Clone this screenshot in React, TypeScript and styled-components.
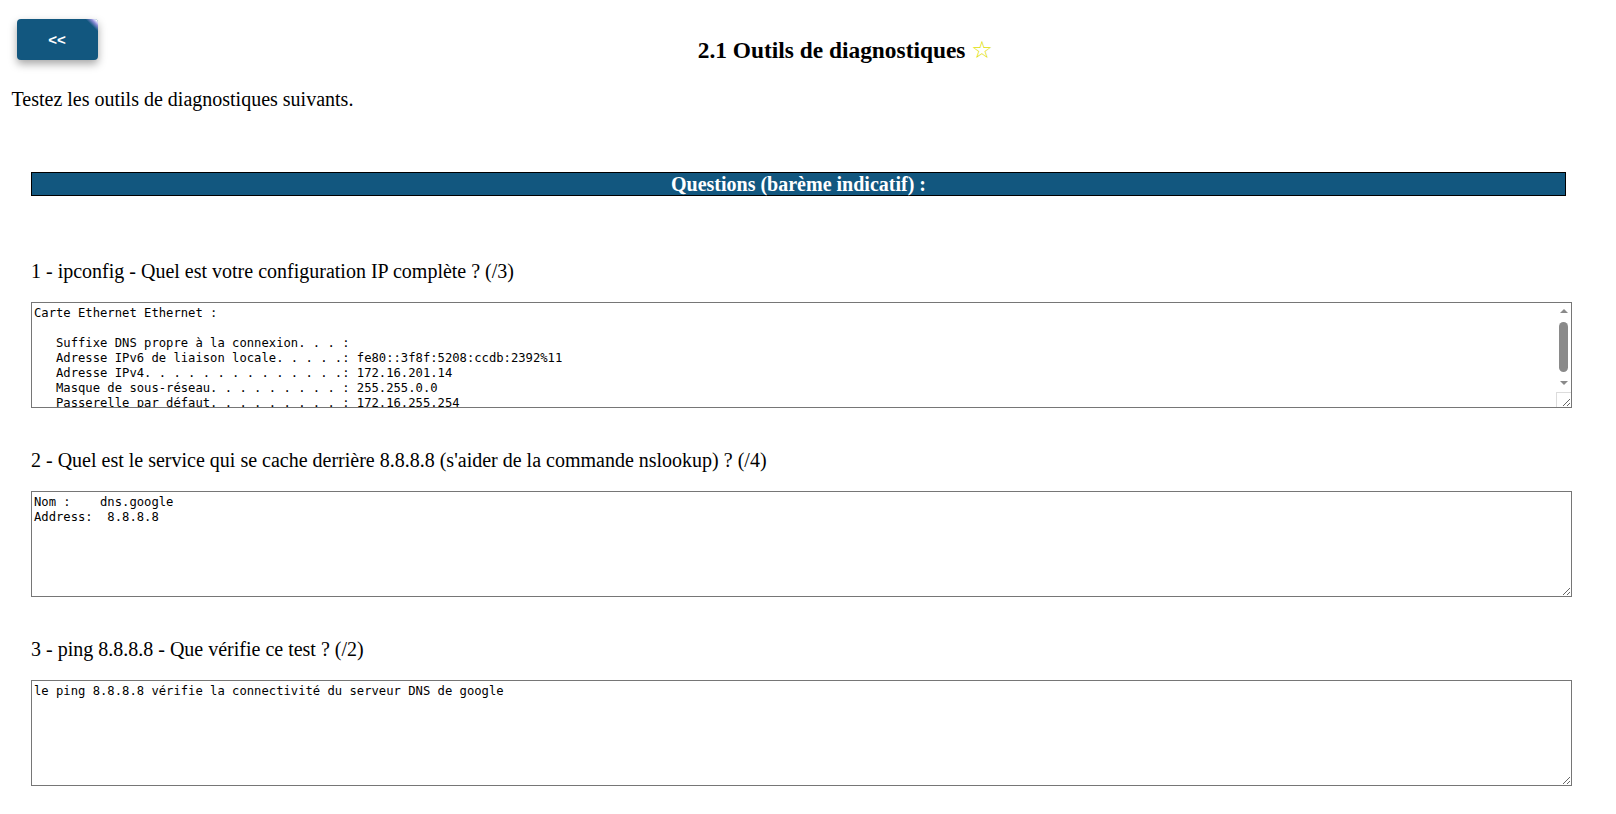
import React from "react";
import styled, { createGlobalStyle } from "styled-components";

const GlobalStyle = createGlobalStyle`
  html, body {
    margin: 0;
    padding: 0;
    background: #ffffff;
  }
  body {
    font-family: "Liberation Serif", "Times New Roman", serif;
    font-size: 20px;
    color: #000000;
  }
`;

const BLUE = "#12577f";
const SCROLL_GREY = "#8a8a8a";

const Page = styled.div`
  padding-top: 19px;
`;

const Header = styled.header`
  display: flex;
  align-items: flex-start;
  padding-left: 16.5px;
`;

const BackButton = styled.button`
  position: relative;
  flex: none;
  width: 81px;
  height: 41px;
  padding: 0;
  border: none;
  border-radius: 4px;
  background: ${BLUE};
  color: #ffffff;
  font-family: "Liberation Sans", Arial, sans-serif;
  font-weight: bold;
  font-size: 15px;
  box-shadow: 0 4px 8px rgba(0, 0, 0, 0.35);
  overflow: hidden;
  cursor: pointer;

  &::after {
    content: "";
    position: absolute;
    top: 0;
    right: 0;
    width: 12px;
    height: 12px;
    background: linear-gradient(
      225deg,
      #ffffff 0px,
      #ffffff 2px,
      #d4d4fa 3px,
      #8c8cd6 5px,
      rgba(18, 87, 127, 0) 9px
    );
  }
`;

const Title = styled.h1`
  flex: 1;
  margin: 17.5px 0 0;
  padding-right: 23px;
  text-align: center;
  font-size: 23.4px;
  font-weight: bold;
  line-height: 27px;
`;

const Star = styled.span`
  font-family: "DejaVu Sans", sans-serif;
  font-weight: normal;
  font-size: 24px;
  color: #e0e000;
`;

const Intro = styled.p`
  margin: 24px 0 0 11.5px;
  line-height: 23px;
`;

const Questions = styled.section`
  margin: 61px 44px 0 31px;
`;

const SectionBar = styled.h2`
  box-sizing: border-box;
  height: 24px;
  margin: 0 6px 0 0;
  border: 1px solid #000000;
  background: ${BLUE};
  color: #ffffff;
  text-align: center;
  font-size: 20px;
  font-weight: bold;
  line-height: 22px;
`;

const QuestionLabel = styled.p<{ $first?: boolean }>`
  margin: ${(p) => (p.$first ? "64px" : "40.5px")} 0 0;
  line-height: 23px;
`;

const AnswerBox = styled.div`
  position: relative;
  margin-top: 19.5px;
`;

const Answer = styled.textarea`
  display: block;
  box-sizing: border-box;
  width: 100%;
  height: 106px;
  margin: 0;
  padding: 3px 2px 2px;
  border: 1px solid #767676;
  background: #ffffff;
  color: #000000;
  font-family: "DejaVu Sans Mono", "Liberation Mono", monospace;
  font-size: 12.2px;
  line-height: 15px;
  resize: both;
  white-space: pre;
  overflow: hidden;
`;

/* Vertical scrollbar drawn over the first answer, as the reference shows it */
const FakeScrollbar = styled.div`
  position: absolute;
  top: 1px;
  right: 1px;
  bottom: 1px;
  width: 15px;
  display: flex;
  flex-direction: column;
  pointer-events: none;
`;

const ScrollArrow = styled.div<{ $dir: "up" | "down" }>`
  flex: none;
  height: 15px;
  display: flex;
  align-items: center;
  justify-content: center;
  background: #ffffff;

  &::before {
    content: "";
    width: 0;
    height: 0;
    border-left: 4.5px solid transparent;
    border-right: 4.5px solid transparent;
    ${(p) =>
      p.$dir === "up"
        ? `border-bottom: 4px solid ${SCROLL_GREY};`
        : `border-top: 4px solid ${SCROLL_GREY};`}
  }
`;

const ScrollTrack = styled.div`
  flex: none;
  height: 57px;
  box-sizing: border-box;
  padding: 3.5px 3px 0 3px;
  background: #ffffff;
`;

const ScrollThumb = styled.div`
  height: 50px;
  border-radius: 5px;
  background: ${SCROLL_GREY};
`;

const ScrollGap = styled.div`
  flex: none;
  height: 2px;
  background: #ffffff;
`;

const ScrollCorner = styled.div`
  flex: 1;
  box-sizing: border-box;
  border-top: 1px solid #dcdcdc;
  border-left: 1px solid #dcdcdc;
`;

const ipconfig = [
  "Carte Ethernet Ethernet :",
  "",
  "   Suffixe DNS propre à la connexion. . . :",
  "   Adresse IPv6 de liaison locale. . . . .: fe80::3f8f:5208:ccdb:2392%11",
  "   Adresse IPv4. . . . . . . . . . . . . .: 172.16.201.14",
  "   Masque de sous-réseau. . . . . . . . . : 255.255.0.0",
  "   Passerelle par défaut. . . . . . . . . : 172.16.255.254",
  "",
].join("\n");

const nslookup = ["Nom :    dns.google", "Address:  8.8.8.8"].join("\n");

const ping = "le ping 8.8.8.8 vérifie la connectivité du serveur DNS de google";

const questions = [
  {
    label: "1 - ipconfig - Quel est votre configuration IP complète ? (/3)",
    answer: ipconfig,
    scrolls: true,
  },
  {
    label:
      "2 - Quel est le service qui se cache derrière 8.8.8.8 (s'aider de la commande nslookup) ? (/4)",
    answer: nslookup,
    scrolls: false,
  },
  {
    label: "3 - ping 8.8.8.8 - Que vérifie ce test ? (/2)",
    answer: ping,
    scrolls: false,
  },
];

export default function App() {
  return (
    <>
      <GlobalStyle />
      <Page>
        <Header>
          <BackButton type="button">&lt;&lt;</BackButton>
          <Title>
            2.1 Outils de diagnostiques <Star>☆</Star>
          </Title>
        </Header>
        <Intro>Testez les outils de diagnostiques suivants.</Intro>
        <Questions>
          <SectionBar>Questions (barème indicatif) :</SectionBar>
          {questions.map((q, i) => (
            <React.Fragment key={i}>
              <QuestionLabel $first={i === 0}>{q.label}</QuestionLabel>
              <AnswerBox>
                <Answer defaultValue={q.answer} spellCheck={false} />
                {q.scrolls && (
                  <FakeScrollbar aria-hidden="true">
                    <ScrollArrow $dir="up" />
                    <ScrollTrack>
                      <ScrollThumb />
                    </ScrollTrack>
                    <ScrollArrow $dir="down" />
                    <ScrollGap />
                    <ScrollCorner />
                  </FakeScrollbar>
                )}
              </AnswerBox>
            </React.Fragment>
          ))}
        </Questions>
      </Page>
    </>
  );
}
